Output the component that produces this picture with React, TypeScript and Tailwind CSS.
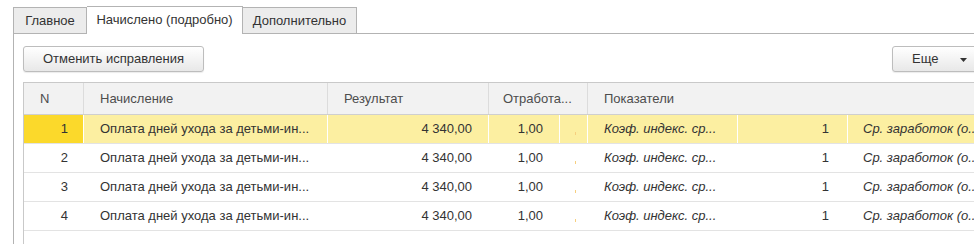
import React from "react";

const rows = [1, 2, 3, 4];

function Mark() {
  return <span className="block w-px h-[3px] bg-[#f7cf7e] mt-[8px] ml-[15px]" />;
}

export default function App() {
  return (
    <div
      className="w-[974px] h-[244px] overflow-hidden bg-white text-[13px] text-[#333333]"
      style={{ fontFamily: '"Liberation Sans", Arial, sans-serif' }}
    >
      <div className="w-[1000px]">
        {/* Tabs */}
        <div className="flex items-end h-[34px] pl-[13px]">
          <div className="w-[74px] h-[27px] flex items-center justify-center pt-[1px] bg-[#ececec] border border-[#b3b3b3]">
            Главное
          </div>
          <div className="w-[156px] h-[28px] flex items-center justify-center pb-[1px] bg-white border-t border-r border-[#b3b3b3]">
            Начислено (подробно)
          </div>
          <div className="w-[114px] h-[27px] flex items-center justify-center pt-[1px] bg-[#ececec] border-t border-r border-b border-[#b3b3b3]">
            Дополнительно
          </div>
          <div className="w-[617px] h-px bg-[#b3b3b3]" />
        </div>

        {/* Panel */}
        <div className="ml-[13px] border-l border-[#b3b3b3] pl-[9px] pt-[12px] h-[210px]">
          {/* Toolbar */}
          <div className="flex justify-between pr-[8px]">
            <button className="w-[181px] h-[26px] rounded-[3px] border border-[#bdbdbd] bg-gradient-to-b from-[#ffffff] to-[#e8e8e8] text-[#333] shadow-[0_1px_1px_rgba(0,0,0,0.08)]">
              Отменить исправления
            </button>
            <button className="w-[100px] h-[26px] rounded-[3px] border border-[#bdbdbd] bg-gradient-to-b from-[#ffffff] to-[#e8e8e8] text-[#333] flex items-center pl-[19px] shadow-[0_1px_1px_rgba(0,0,0,0.08)]">
              <span>Еще</span>
              <svg width="7" height="4" viewBox="0 0 7 4" className="ml-[22px] mt-[1px]">
                <path d="M0 0 H7 L3.5 4 Z" fill="#333" />
              </svg>
            </button>
          </div>

          {/* Table */}
          <div className="mt-[10px] h-[170px] border-l border-t border-[#c9c9c9]">
            <div className="flex h-[32px] bg-[#f2f2f2] border-b border-[#cfcfcf] text-[#4d4d4d]">
              <div className="w-[60px] flex items-center pl-[16px] border-r border-[#dcdcdc]">N</div>
              <div className="w-[244px] flex items-center pl-[16px] border-r border-[#dcdcdc]">Начисление</div>
              <div className="w-[161px] flex items-center pl-[16px] border-r border-[#dcdcdc]">Результат</div>
              <div className="w-[99px] flex items-center pl-[14px] border-r border-[#dcdcdc]">Отработа...</div>
              <div className="flex-1 flex items-center pl-[16px]">Показатели</div>
            </div>
            {rows.map((n) => {
              const sel = n === 1;
              return (
                <div
                  key={n}
                  className={
                    "flex h-[29px] border-b border-[#e3e3e3] " + (sel ? "bg-[#fcefa1]" : "bg-white")
                  }
                >
                  <div
                    className={
                      "w-[60px] flex items-center justify-end pr-[15px] border-r border-white " +
                      (sel ? "bg-[#fbd92b]" : "")
                    }
                  >
                    {n}
                  </div>
                  <div className="w-[244px] flex items-center pl-[16px] border-r border-white whitespace-nowrap">
                    Оплата дней ухода за детьми-ин...
                  </div>
                  <div className="w-[161px] flex items-center justify-end pr-[16px] border-r border-white">
                    4 340,00
                  </div>
                  <div className="w-[71px] flex items-center justify-end pr-[16px] border-r border-white">
                    1,00
                  </div>
                  <div className="w-[28px] flex items-center border-r border-white">
                    <Mark />
                  </div>
                  <div className="w-[150px] flex items-center pl-[16px] border-r border-white italic whitespace-nowrap">
                    Коэф. индекс. ср...
                  </div>
                  <div className="w-[110px] flex items-center justify-end pr-[18px] border-r border-white">
                    1
                  </div>
                  <div className="flex-1 flex items-center pl-[15px] italic whitespace-nowrap">
                    Ср. заработок (о...
                  </div>
                </div>
              );
            })}
          </div>
        </div>
      </div>
    </div>
  );
}
